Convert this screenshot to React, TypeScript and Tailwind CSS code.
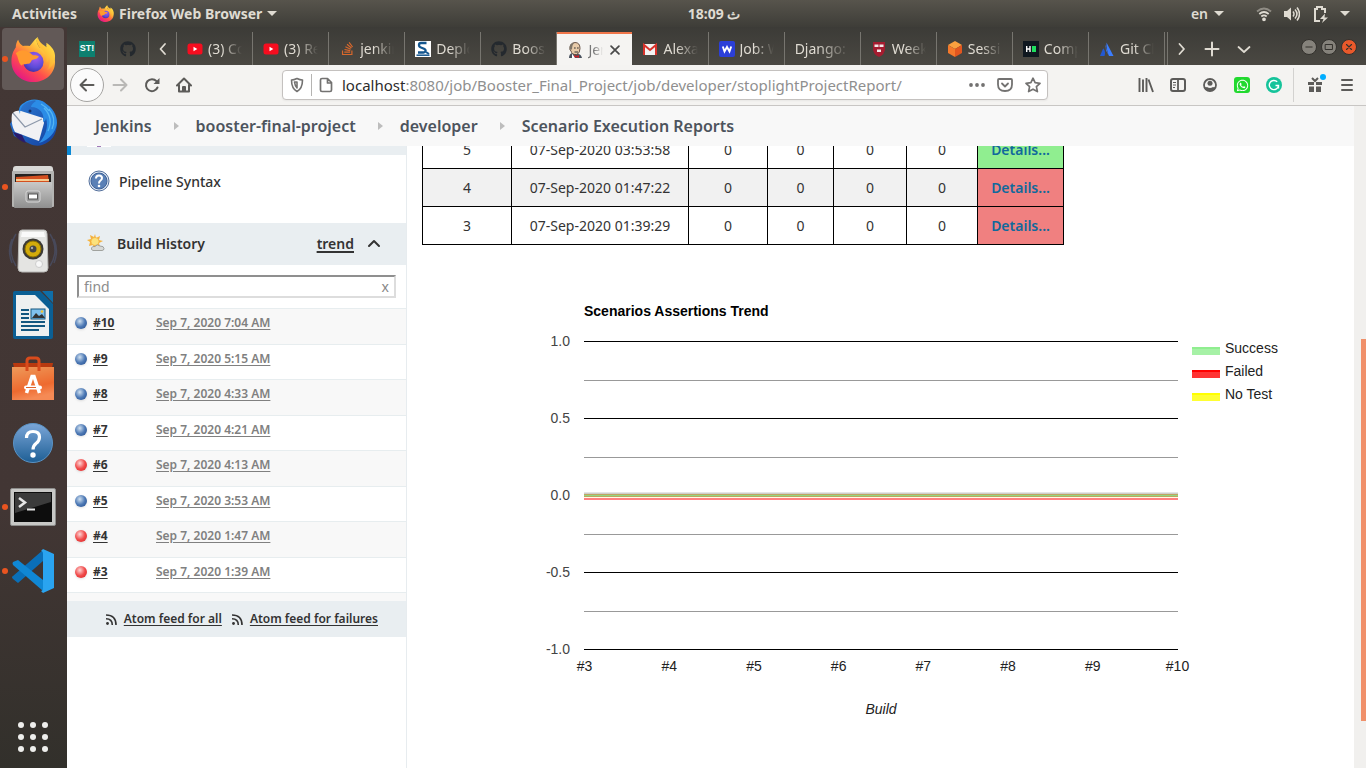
import React from "react";
import { FaGithub, FaWhatsapp, FaStackOverflow } from "react-icons/fa";

const FirefoxLogo = ({ size, id }: { size: number; id: string }) => (
  <svg width={size} height={size} viewBox="0 0 48 48" aria-hidden="true">
    <defs>
      <linearGradient id={id + "a"} x1="0.8" y1="0.1" x2="0.2" y2="0.95">
        <stop offset="0" stopColor="#fff44f" />
        <stop offset="0.35" stopColor="#ffa436" />
        <stop offset="0.65" stopColor="#ff4d4d" />
        <stop offset="1" stopColor="#e31587" />
      </linearGradient>
      <radialGradient id={id + "b"} cx="0.6" cy="0.3" r="0.8">
        <stop offset="0" stopColor="#a45bf0" />
        <stop offset="0.6" stopColor="#5b4bd8" />
        <stop offset="1" stopColor="#3a2a9c" />
      </radialGradient>
      <linearGradient id={id + "c"} x1="1" y1="0" x2="0.3" y2="1">
        <stop offset="0" stopColor="#fff44f" />
        <stop offset="0.7" stopColor="#ffb433" />
        <stop offset="1" stopColor="#ff7139" stopOpacity="0.2" />
      </linearGradient>
    </defs>
    <path d="M29 1c-2 4-1 7 2 11l8 2c-1-2-1-3-1-5 5 5 9 11 9 18 0 12-10 21-22.500 21S1.500 39 1.500 26.500c0-7 2-11 4.500-14.500 0-3 1-6 2.500-8 1 3 2.500 5 5 6.500 2-.5 5-.5 7 0C23 8 25 4 29 1z" fill={"url(#" + id + "a)"} />
    <circle cx="24.500" cy="27" r="10.500" fill={"url(#" + id + "b)"} />
    <path d="M29 1c-2 4-1 7 2 11 5 4 8 9 7 16 2-2 3-5 2-9 3 5 2 12-2 17 6-3 9-9 9-15 0-5-3-10-9-14 0 2 0 3 1 5C34 9 30 6 29 1z" fill={"url(#" + id + "c)"} />
    <path d="M6 18c4-4 9-4 14-1l4 3c2 0 4 0 6 1-1 3-5 3-7 4-2 2-1 4-5 4-3 1-5 0-6 2-4-4-3-9-6-13z" fill="#ff9a2e" />
  </svg>
);

const ThunderbirdIcon = () => (
  <svg width="50" height="50" viewBox="0 0 50 50" aria-hidden="true">
    <defs>
      <linearGradient id="tb" x1="0" y1="0" x2="1" y2="1">
        <stop offset="0" stopColor="#2f7fd8" />
        <stop offset="1" stopColor="#123f9e" />
      </linearGradient>
    </defs>
    <path d="M11 12C14 4 22 1 30 3c4-1 7 1 8 3 7 4 11 11 11 19 0 12-6 19-15 22-3 1-8 1-12-1L6 38 2 26z" fill="url(#tb)" />
    <path d="M4 16c2-3 5-4 9-3l22 7 1 5-5 18-3-1-21-8c-3-5-4-12-3-18z" fill="#f1f1f4" />
    <path d="M5 15l12 14 17-8" fill="none" stroke="#8d98aa" strokeWidth="1.200" />
    <path d="M12 16c0-9 8-14 16-13-3 2-5 4-5 6 9 0 14 7 12 15 2-1 3-2 3-4 3 9-1 19-7 25 10-3 17-11 18-20 0-8-5-16-12-20-7-5-16-4-21 0-4 2-6 5-4 11z" fill="#2b8ce6" />
    <path d="M36 10c6 6 8 14 4 23M41 11c5 6 6 13 3 20M33 6c4 2 6 4 8 7" fill="none" stroke="#54b5f3" strokeWidth="1.300" />
    <path d="M5 34c3 6 7 9 13 11l-4-8z" fill="#2a1b6c" />
    <circle cx="22" cy="13" r="1.500" fill="#14306b" />
  </svg>
);

const FilesIcon = () => (
  <svg width="44" height="46" viewBox="0 0 44 46" aria-hidden="true">
    <defs>
      <linearGradient id="fi" x1="0" y1="0" x2="0" y2="1">
        <stop offset="0" stopColor="#c9c9c8" />
        <stop offset="1" stopColor="#8f8f8f" />
      </linearGradient>
    </defs>
    <path d="M2 5q0-3 3-3h34q3 0 3 3l1 8H1z" fill="#d9d9d7" />
    <rect x="1" y="7" width="42" height="36" rx="1" fill="#b4b4b2" />
    <rect x="4" y="10" width="36" height="10" fill="#242220" />
    <path d="M5 13l17-1 15-1 1 7H5z" fill="#d4501f" />
    <path d="M5 15h33v2H5z" fill="#f6c98e" />
    <rect x="3" y="18" width="38" height="26" rx="1" fill="url(#fi)" />
    <rect x="15" y="27" width="14" height="11" rx="2" fill="#9b9b9b" stroke="#d8d8d8" />
    <rect x="17.500" y="30" width="9" height="5" fill="#fff" stroke="#555" />
  </svg>
);

const SpeakerIcon = () => (
  <svg width="50" height="46" viewBox="0 0 50 46" aria-hidden="true">
    <path d="M8 6q-10 16 0 32M4 11q-5 12 0 24M42 6q10 16 0 32M46 11q5 12 0 24" fill="none" stroke="#4e5c80" strokeOpacity="0.500" strokeWidth="1.500" />
    <path d="M14 2h22q3 0 3 4l1 34q0 4-4 4H14q-4 0-4-4l1-34q0-4 3-4z" fill="#e4e4e2" stroke="#b9b9b7" />
    <path d="M14 4h22l1 5H13z" fill="#fafafa" />
    <circle cx="25" cy="21" r="10.500" fill="#3c3a36" />
    <circle cx="25" cy="21" r="8" fill="#d3ab0b" stroke="#8e7202" />
    <circle cx="25" cy="21" r="3.500" fill="#444" />
    <circle cx="24" cy="20" r="1.200" fill="#aaa" />
    <circle cx="31" cy="36" r="3.500" fill="#f7f7f7" stroke="#ccc" />
  </svg>
);

const WriterIcon = () => (
  <svg width="42" height="50" viewBox="0 0 42 50" aria-hidden="true">
    <path d="M3 1h25l13 13v33q0 2-2 2H3q-2 0-2-2V3q0-2 2-2z" fill="#0b5f94" />
    <path d="M30 1h11v12z" fill="#0f6ea8" />
    <path d="M4 5h19l14 14v27H4z" fill="#eef0f0" />
    <path d="M9 20h8M9 24h8M9 28h8M9 32h24M9 36h24M9 40h18" stroke="#14577f" strokeWidth="2" />
    <rect x="19" y="19" width="14" height="10" fill="#7fc1ee" stroke="#14577f" />
    <path d="M20 28l4-5 3 3 3-2 3 4z" fill="#333" />
    <circle cx="30" cy="21.500" r="1.300" fill="#f4c430" />
  </svg>
);

const SoftwareIcon = () => (
  <svg width="44" height="46" viewBox="0 0 44 46" aria-hidden="true">
    <defs>
      <linearGradient id="sw" x1="0" y1="0" x2="0.300" y2="1">
        <stop offset="0" stopColor="#ee9a5a" />
        <stop offset="0.700" stopColor="#ee6a2f" />
        <stop offset="1" stopColor="#f58a55" />
      </linearGradient>
    </defs>
    <path d="M2 7h40l-1 5H3z" fill="#b8390f" />
    <rect x="1" y="11" width="42" height="33" fill="url(#sw)" />
    <path d="M16 15V5q0-3 3-3h6q3 0 3 3v10" fill="none" stroke="#d94b1c" strokeWidth="3" />
    <path d="M15.500 37L21 20.500h2L28.500 37" fill="none" stroke="#fff" strokeWidth="3.500" />
    <rect x="13" y="29.500" width="18" height="4" rx="2" fill="#fff" />
    <path d="M15 31.500h10" stroke="#e0632b" />
  </svg>
);

const HelpDockIcon = () => (
  <svg width="44" height="44" viewBox="0 0 44 44" aria-hidden="true">
    <defs>
      <linearGradient id="hd" x1="0" y1="0" x2="0" y2="1">
        <stop offset="0" stopColor="#7ba6d8" />
        <stop offset="1" stopColor="#1e5f95" />
      </linearGradient>
    </defs>
    <circle cx="22" cy="22" r="19.500" fill="url(#hd)" stroke="#5a93c5" />
    <path d="M15.500 17q0-6.500 6.500-6.500t6.500 5.500q0 4-3.500 6.500-3 2.500-3 6" fill="none" stroke="#fff" strokeWidth="3.200" />
    <circle cx="22" cy="34" r="2.700" fill="#fff" />
  </svg>
);

const TerminalIcon = () => (
  <svg width="46" height="38" viewBox="0 0 46 38" aria-hidden="true">
    <rect x="0.500" y="0.500" width="45" height="37" rx="1.500" fill="#c8c8c6" stroke="#8d8d8b" />
    <rect x="4" y="4" width="38" height="30" fill="#0d0d0d" />
    <path d="M5 5h36v9L5 25z" fill="#3b3b3b" />
    <path d="M9 10l6 4.500-6 4.500" fill="none" stroke="#e6e6e6" strokeWidth="2.500" />
    <path d="M17 21.500h8" stroke="#e6e6e6" strokeWidth="2" />
  </svg>
);

const CodeIcon = () => (
  <svg width="44" height="44" viewBox="0 0 44 44" aria-hidden="true">
    <path d="M32 1v11L7 34l-5-4q-2-2 0-3z" fill="#0a6fb8" />
    <path d="M7 11l25 20v11L2 16q-1-2 0-3z" fill="#1087d4" />
    <path d="M32 0l11 5v34l-11 5-2-2q2 0 2-3V5q0-3-2-3z" fill="#2aa4f0" />
  </svg>
);

const dockItems = [
  { name: "Firefox", icon: <FirefoxLogo size={46} id="dock" />, running: true, active: true },
  { name: "Thunderbird", icon: <ThunderbirdIcon /> },
  { name: "Files", icon: <FilesIcon />, running: true },
  { name: "Rhythmbox", icon: <SpeakerIcon /> },
  { name: "Writer", icon: <WriterIcon /> },
  { name: "Software", icon: <SoftwareIcon /> },
  { name: "Help", icon: <HelpDockIcon /> },
  { name: "Terminal", icon: <TerminalIcon />, running: true },
  { name: "Code", icon: <CodeIcon />, running: true },
];

const YoutubeIcon = () => (
  <svg width="16" height="16" viewBox="0 0 16 16" aria-hidden="true">
    <rect x="0.500" y="2.500" width="15" height="11" rx="2.500" fill="#f60d1f" />
    <path d="M6.500 5.800v4.400L10.300 8z" fill="#fff" />
  </svg>
);
const DeployIcon = () => (
  <svg width="16" height="16" viewBox="0 0 16 16" aria-hidden="true">
    <rect width="16" height="16" fill="#fff" />
    <path d="M11.500 2H6Q4 2 4 4t2 2.500l3 1.200q2 1 1.500 2.500T8 11.500H3" fill="none" stroke="#14568e" strokeWidth="2.300" />
    <path d="M1.500 14.200h13" stroke="#14568e" strokeWidth="1.500" />
    <path d="M11 11l3 2" stroke="#14568e" strokeWidth="2" />
  </svg>
);
const JenkinsIcon = () => (
  <svg width="16" height="16" viewBox="0 0 16 16" aria-hidden="true">
    <path d="M2 16q0-4 3-5l6 1q3 0 4 4z" fill="#48515d" />
    <path d="M3 6q0-5 5-5.500 5 0 5 6 0 5-3.500 6Q5 13 4 9 2.500 8 3 6z" fill="#e8cba9" stroke="#5c463a" strokeWidth="0.900" />
    <path d="M2.700 7.500Q1.500 1 8 .4 5 2 5 7.500z" fill="#7d7468" />
    <path d="M7 6h1.700M10 6h1.700M7.500 10h3.500" stroke="#333" strokeWidth="1" />
    <path d="M7 13l2.500 1L12 13v3l-2.500-1L7 16z" fill="#c8242b" />
    <path d="M5 11.500l3 4.500H5z" fill="#fff" />
  </svg>
);
const GmailIcon = () => (
  <svg width="16" height="16" viewBox="0 0 16 16" aria-hidden="true">
    <rect x="1" y="3" width="14" height="11" rx="1" fill="#f2f2f2" />
    <path d="M2 14V4l6 5 6-5v10" fill="none" stroke="#d9322b" strokeWidth="2" />
  </svg>
);
const WIcon = () => (
  <svg width="16" height="16" viewBox="0 0 16 16" aria-hidden="true">
    <rect width="16" height="16" rx="2" fill="#2b3fd8" />
    <path d="M3.800 5.500l1.700 5L8 6l2.500 4.500 1.700-5" fill="none" stroke="#fff" strokeWidth="1.900" />
  </svg>
);
const HarvardIcon = () => (
  <svg width="16" height="16" viewBox="0 0 16 16" aria-hidden="true">
    <path d="M2 1h12v7q0 5-6 8-6-3-6-8z" fill="#a51c30" />
    <path d="M3.500 3.500h4v2.500h-4zM8.500 3.500h4V6h-4zM6 8.500h4V11H6z" fill="#f3e9e9" />
  </svg>
);
const CubeIcon = () => (
  <svg width="16" height="16" viewBox="0 0 16 16" aria-hidden="true">
    <path d="M8 0l7 4-7 4-7-4z" fill="#f9a13f" />
    <path d="M1 4l7 4v8l-7-4z" fill="#f4792b" />
    <path d="M15 4L8 8v8l7-4z" fill="#e2561f" />
  </svg>
);
const HIcon = () => (
  <svg width="16" height="16" viewBox="0 0 16 16" aria-hidden="true">
    <rect width="16" height="16" fill="#101820" />
    <path d="M3.700 5v6M7 5v6M3.700 8H7" stroke="#fff" strokeWidth="1.400" />
    <rect x="9" y="5" width="4" height="6" fill="#1fe05f" />
  </svg>
);
const AtlassianIcon = () => (
  <svg width="16" height="16" viewBox="0 0 16 16" aria-hidden="true">
    <path d="M4.500 7.500Q7 11 5.500 15H1l3-7.200z" fill="#2358d0" />
    <path d="M7.500 1.500L14.500 15H10Q7 8 7.500 1.500z" fill="#3b7dff" />
    <path d="M7.500 1.500Q5.500 6 10 15L7 9.500Q5.800 5 7.500 1.500z" fill="#3b7dff" />
  </svg>
);

const tabs = [
  { icon: <YoutubeIcon />, label: "(3) Co" },
  { icon: <YoutubeIcon />, label: "(3) Re" },
  { icon: <FaStackOverflow size={15} color="#d9682c" />, label: "jenkin" },
  { icon: <DeployIcon />, label: "Deplo" },
  { icon: <FaGithub size={16} color="#24292e" />, label: "Boost" },
  { icon: <JenkinsIcon />, label: "Jen", active: true },
  { icon: <GmailIcon />, label: "Alexa" },
  { icon: <WIcon />, label: "Job: W" },
  { icon: null, label: "Django: H" },
  { icon: <HarvardIcon />, label: "Week" },
  { icon: <CubeIcon />, label: "Sessi" },
  { icon: <HIcon />, label: "Comp" },
  { icon: <AtlassianIcon />, label: "Git Cl" },
];

type StrokeProps = { d: string; size?: number; w?: number; className?: string };
const Line = ({ d, size = 16, w = 2, className = "" }: StrokeProps) => (
  <svg width={size} height={size} viewBox="0 0 16 16" fill="none" stroke="currentColor" strokeWidth={w} strokeLinecap="round" strokeLinejoin="round" className={className} aria-hidden="true">
    <path d={d} />
  </svg>
);

const Caret = () => (
  <svg width="10" height="5" viewBox="0 0 10 5" aria-hidden="true">
    <path d="M0 0h10L5 5z" fill="currentColor" />
  </svg>
);

function TopBar() {
  return (
    <header className="flex h-[27px] shrink-0 items-center bg-linear-to-b from-[#57544c] to-[#3e3d38] text-[14px] text-[#dfdbd2]">
      <div className="flex flex-1 items-center pl-3 font-bold">
        <button className="mr-5">Activities</button>
        <button className="flex items-center gap-[5px]">
          <FirefoxLogo size={17} id="bar" />
          Firefox Web Browser
          <Caret />
        </button>
      </div>
      <time dir="ltr" className="ml-[66px] text-[14px] font-bold">
        18:09 <span className="font-semibold">ث</span>
      </time>
      <div className="flex flex-1 items-center justify-end gap-3 pr-4">
        <button className="mr-5 flex items-center gap-[6px] font-semibold">en <Caret /></button>
        <svg width="16" height="16" viewBox="0 0 16 16" fill="none" stroke="currentColor" strokeWidth="1.800" aria-hidden="true">
          <path d="M1 5.500q7-6 14 0" opacity="0.450" />
          <path d="M3.300 8q4.700-4 9.400 0M5.300 10.500q2.700-2.300 5.400 0" />
          <circle cx="8" cy="13.300" r="1" fill="currentColor" />
        </svg>
        <svg width="16" height="16" viewBox="0 0 16 16" fill="none" stroke="currentColor" strokeWidth="1.500" aria-hidden="true">
          <path d="M0 5h3l4-3.500v13L3 11H0z" fill="currentColor" stroke="none" />
          <path d="M9 5.500q2 2.500 0 5M11 3.500q4 4.500 0 9M13 1.500q5 6.500 0 13" />
        </svg>
        <svg width="16" height="18" viewBox="0 0 16 18" fill="none" stroke="currentColor" strokeWidth="2" aria-hidden="true">
          <path d="M8 16H3V4h2V2h5v2h3v4" />
          <path d="M13 8.500l-5 5.500h3.500l-1.500 4 6-5.500h-3.500z" fill="currentColor" stroke="none" />
        </svg>
        <Caret />
      </div>
    </header>
  );
}

function Dock() {
  return (
    <nav aria-label="Dock" className="flex w-[67px] shrink-0 flex-col bg-linear-to-b from-[#433735] via-[#423634] via-65% to-[#32302b]">
      {dockItems.map((item) => (
        <button key={item.name} aria-label={item.name} className="relative flex h-16 w-full items-center pl-[2px]">
          <span className={item.active ? "flex h-[62px] w-[62px] items-center justify-center rounded bg-[#625957]" : "flex h-[62px] w-[62px] items-center justify-center"}>
            {item.icon}
          </span>
          {item.running && <span className="absolute left-[2px] size-[6px] rounded-full bg-[#e95420]" />}
        </button>
      ))}
      <button aria-label="Show applications" className="mt-auto mb-4 ml-[18px] grid w-[30px] grid-cols-3 gap-[6px]">
        {[0, 1, 2, 3, 4, 5, 6, 7, 8].map((n) => (
          <span key={n} className="size-[6px] rounded-full bg-[#eeeeec]" />
        ))}
      </button>
    </nav>
  );
}

const winBtn = "flex size-4 items-center justify-center rounded-full border border-[#33312d]";

function TabStrip() {
  return (
    <div className="flex h-[38px] shrink-0 bg-linear-to-b from-[#3c3b37] to-[#4a4842] pt-[5px] text-[14px] text-[#dfdbd2]">
      <button aria-label="Stoplight" className="flex w-[41px] items-center justify-center border-r border-[#77756f]">
        <span className="flex size-4 items-center justify-center bg-[#0d8070] font-['Liberation_Sans',sans-serif] text-[9px] font-bold text-white">ST!</span>
      </button>
      <button aria-label="GitHub" className="flex w-[41px] items-center justify-center border-r border-[#77756f]">
        <FaGithub size={16} color="#24292e" />
      </button>
      <button aria-label="Scroll tabs left" className="flex w-7 items-center justify-center border-r border-[#77756f]">
        <Line d="M10 3L5.500 8 10 13" w={1.8} />
      </button>
      <div role="tablist" className="flex min-w-0 flex-1">
        {tabs.map((t, i) => (
          <div
            key={i}
            role="tab"
            aria-selected={!!t.active}
            className={
              t.active
                ? "flex min-w-0 flex-1 items-center gap-[5px] border-t-2 border-[#f0764a] bg-[#f5f4f2] px-[10px] text-[#777]"
                : "flex min-w-0 flex-1 items-center gap-[5px] border-r border-[#77756f] px-[10px]"
            }
          >
            {t.icon && <span className="flex w-4 shrink-0 justify-center">{t.icon}</span>}
            <span className="min-w-0 flex-1 overflow-hidden mask-r-from-40% mask-r-to-100% whitespace-nowrap">{t.label}</span>
            {t.active && (
              <button aria-label="Close tab" className="shrink-0 text-[#4a4a4a]">
                <Line d="M3.500 3.500l9 9M12.500 3.500l-9 9" size={14} w={2} />
              </button>
            )}
          </div>
        ))}
      </div>
      <div className="flex items-center">
        <span className="h-full w-[3px] border-r border-[#77756f]" />
        <button aria-label="Scroll tabs right" className="ml-[5px] flex w-[18px] justify-center"><Line d="M5.500 3L10 8l-4.500 5" w={1.8} /></button>
        <button aria-label="New tab" className="ml-3 flex w-[18px] justify-center"><Line d="M8 1.500v13M1.500 8h13" /></button>
        <button aria-label="List tabs" className="ml-[14px] flex w-[18px] justify-center"><Line d="M2.500 6L8 11l5.500-5" w={1.8} /></button>
        <div className="mr-[9px] ml-12 flex items-center gap-1 pb-1 text-[#33312d]">
          <button aria-label="Minimize" className={winBtn + " bg-[#85827b]"}><Line d="M3 8h10" size={10} w={1.6} /></button>
          <button aria-label="Maximize" className={winBtn + " bg-[#85827b]"}><Line d="M2.500 4h11v8h-11z" size={10} w={1.6} /></button>
          <button aria-label="Close" className={winBtn + " bg-[#e9592b]"}><Line d="M4 4l8 8M12 4l-8 8" size={10} w={1.8} /></button>
        </div>
      </div>
    </div>
  );
}

const toolBtn = "flex w-8 shrink-0 items-center justify-center";

function Toolbar() {
  return (
    <div className="flex h-[41px] shrink-0 items-center border-b border-[#c8c6c4] bg-[#f4f3f1] pr-[3px] pl-[3px] text-[#5c5b59]">
      <button aria-label="Back" className="flex size-[34px] shrink-0 items-center justify-center rounded-full border border-[#a5a4a2] bg-[#fbfbfb]">
        <Line d="M14.500 8h-13M7 2.500L1.500 8 7 13.500" />
      </button>
      <button aria-label="Forward" className={toolBtn + " text-[#b9b8b6]"}><Line d="M1.500 8h13M9 2.500L14.500 8 9 13.500" /></button>
      <button aria-label="Reload" className={toolBtn}>
        <svg width="16" height="16" viewBox="0 0 16 16" aria-hidden="true">
          <path d="M13.500 10.500A6 6 0 1 1 12.500 4.200" fill="none" stroke="currentColor" strokeWidth="2" strokeLinecap="round" />
          <path d="M15.500 1v6h-6z" fill="currentColor" />
        </svg>
      </button>
      <button aria-label="Home" className={toolBtn}>
        <svg width="16" height="16" viewBox="0 0 16 16" fill="none" stroke="currentColor" strokeWidth="2" strokeLinecap="round" strokeLinejoin="round" aria-hidden="true">
          <path d="M1 8.500L8 1.500l7 7M3 8v6.500h10V8" />
          <path d="M7 14v-4h2v4z" />
        </svg>
      </button>
      <div className="mx-[82px] flex h-[30px] min-w-0 flex-1 items-center rounded border border-[#c4c1bf] bg-white px-[6px] shadow-xs">
        <Line d="M8 1.500Q5 3 2.500 3q0 8.500 5.500 11.500Q13.500 11.500 13.500 3 11 3 8 1.500zM8 5v6q-2-2-2.500-6z" w={1.6} className="text-[#737271]" />
        <span className="mx-[6px] h-[22px] w-px bg-[#b5b4b2]" />
        <Line d="M4 1.500h5.500l4 4V13q0 1.500-1.500 1.500H4q-1.500 0-1.500-1.500V3Q2.500 1.500 4 1.500zM9.500 2v4h4" w={1.7} className="text-[#737271]" />
        <label htmlFor="url" className="ml-2 text-[15px] text-[#2b2b2b]">localhost</label>
        <input id="url" defaultValue=":8080/job/Booster_Final_Project/job/developer/stoplightProjectReport/" className="min-w-0 flex-1 bg-transparent text-[15px] text-[#8f8f8f] outline-none" />
        <div className="flex items-center gap-3 text-[#737271]">
          <button aria-label="Page actions">
            <svg width="16" height="16" viewBox="0 0 16 16" fill="currentColor" aria-hidden="true"><circle cx="2" cy="8" r="1.900" /><circle cx="8" cy="8" r="1.900" /><circle cx="14" cy="8" r="1.900" /></svg>
          </button>
          <button aria-label="Save to Pocket"><Line d="M2 2h12q1 0 1 1v4.500q0 6.500-7 6.500T1 7.500V3q0-1 1-1zM5 6.500l3 3 3-3" w={1.8} /></button>
          <button aria-label="Bookmark"><Line d="M8 1.200l2.100 4.500 4.900.6-3.600 3.400 1 4.900L8 12.200l-4.400 2.400 1-4.900L1 6.300l4.900-.6z" w={1.7} /></button>
        </div>
      </div>
      <button aria-label="Library" className={toolBtn}>
        <svg width="16" height="16" viewBox="0 0 16 16" stroke="currentColor" strokeWidth="1.900" aria-hidden="true"><path d="M1.500 1v14M5 2.500V15M8.500 1v14M10.500 2.500L15 15" /></svg>
      </button>
      <button aria-label="Sidebars" className={toolBtn}>
        <svg width="16" height="16" viewBox="0 0 16 16" fill="none" stroke="currentColor" aria-hidden="true"><rect x="1" y="2" width="14" height="12" rx="2" strokeWidth="2" /><path d="M8 2v12" strokeWidth="1.800" /><path d="M3 5.500h3M3 8h3M3 10.500h2" /></svg>
      </button>
      <button aria-label="Account" className={toolBtn}>
        <svg width="16" height="16" viewBox="0 0 16 16" aria-hidden="true"><circle cx="8" cy="8" r="6" fill="none" stroke="currentColor" strokeWidth="1.800" /><circle cx="8" cy="6.300" r="2.500" fill="currentColor" /><path d="M2.500 10.200q1.500.3 2.500-.2 3 2 6 0 1 .5 2.500.2-1.500 4-5.500 4t-5.500-4z" fill="currentColor" /></svg>
      </button>
      <button aria-label="WhatsApp" className={toolBtn}>
        <span className="flex size-4 items-center justify-center rounded-[3px] bg-[#22d92f] text-white"><FaWhatsapp size={13} /></span>
      </button>
      <button aria-label="Grammarly" className={toolBtn}>
        <svg width="16" height="16" viewBox="0 0 16 16" aria-hidden="true"><circle cx="8" cy="8" r="8" fill="#15c39a" /><path d="M11.200 4.800A4.600 4.600 0 1 0 12.500 8.500H9.500M12.500 8.500v3" fill="none" stroke="#fff" strokeWidth="1.400" /></svg>
      </button>
      <span className="mr-[5px] ml-[3px] h-[34px] w-px bg-[#d3d2d0]" />
      <button aria-label="What's new" className={toolBtn + " relative"}>
        <svg width="16" height="16" viewBox="0 0 16 16" fill="currentColor" aria-hidden="true"><path d="M1 5h6v3H1zM9 5h6v3H9zM2 9.500h5V15H2zM9 9.500h5V15H9z" /><path d="M5 1l3 3 3-3" fill="none" stroke="currentColor" strokeWidth="2" /></svg>
        <span className="absolute top-[-3px] right-[5px] size-[6px] rounded-full bg-[#00adff]" />
      </button>
      <button aria-label="Menu" className={toolBtn}><Line d="M3 3h10M3 8h10M3 13h10" /></button>
    </div>
  );
}

const Ball = ({ color }: { color: "blue" | "red" }) => (
  <span
    className={
      color === "blue"
        ? "size-3 shrink-0 rounded-full bg-radial-[at_40%_35%] from-[#cfe0f0] via-[#4d79b5] to-[#1f4788] shadow-sm"
        : "size-3 shrink-0 rounded-full bg-radial-[at_40%_35%] from-[#ffd5d5] via-[#f04b4b] to-[#d91f1f] shadow-sm"
    }
  />
);

const builds: { id: string; date: string; color: "blue" | "red" }[] = [
  { id: "#10", date: "Sep 7, 2020 7:04 AM", color: "blue" },
  { id: "#9", date: "Sep 7, 2020 5:15 AM", color: "blue" },
  { id: "#8", date: "Sep 7, 2020 4:33 AM", color: "blue" },
  { id: "#7", date: "Sep 7, 2020 4:21 AM", color: "blue" },
  { id: "#6", date: "Sep 7, 2020 4:13 AM", color: "red" },
  { id: "#5", date: "Sep 7, 2020 3:53 AM", color: "blue" },
  { id: "#4", date: "Sep 7, 2020 1:47 AM", color: "red" },
  { id: "#3", date: "Sep 7, 2020 1:39 AM", color: "red" },
];

const Feed = ({ label }: { label: string }) => (
  <a href="#feed" className="flex items-center gap-[7px]">
    <svg width="11" height="11" viewBox="0 0 11 11" fill="none" stroke="currentColor" strokeWidth="1.600" aria-hidden="true">
      <path d="M0 1q10 0 10 10M0 4.700q6.300 0 6.300 6.300" />
      <circle cx="1.500" cy="9.500" r="1.400" fill="currentColor" stroke="none" />
    </svg>
    <span className="underline underline-offset-2">{label}</span>
  </a>
);

function Sidebar() {
  return (
    <aside className="w-[340px] shrink-0 border-r border-[#e7ecef] text-[#333]">
      <div className="h-[9px] border-l-4 border-[#0b89d6] bg-[#e9eef1] pl-4">
        <div className="flex h-px w-6 justify-center bg-white"><span className="w-1 bg-[#a07ab8]" /></div>
      </div>
      <a href="#syntax" className="flex h-[52px] items-center gap-[9px] pl-[21px] text-[14px] font-medium">
        <svg width="22" height="22" viewBox="0 0 22 22" aria-hidden="true">
          <circle cx="11" cy="11" r="10" fill="#dce5f1" stroke="#54709c" />
          <circle cx="11" cy="11" r="8" fill="#5a80b6" stroke="#3d6198" />
          <path d="M8 8.500q0-3 3-3t3 2.500q0 1.500-1.500 2.500T11 13.500" fill="none" stroke="#fff" strokeWidth="2" />
          <circle cx="11" cy="16" r="1.300" fill="#fff" />
        </svg>
        Pipeline Syntax
      </a>
      <div className="mt-4 flex h-[42px] items-center bg-[#e9eef1] pr-6 pb-[2px] pl-5 text-[14px] font-semibold">
        <svg width="18" height="18" viewBox="0 0 18 18" aria-hidden="true">
          <path d="M8 0l1 4 4-2-1 4 4 1-4 2 1 4-4-1-2 3-1-4-4 1 1-4-3-2 4-1-1-4 4 2z" fill="#f5b23c" />
          <circle cx="8" cy="7.500" r="4" fill="#fbe27c" stroke="#f2a93a" strokeWidth="0.600" />
          <path d="M6 16.500q-2-.5-1.500-2.500T8 12.500Q10 9.500 13 12q4 0 4 2.500 0 2-2 2z" fill="#d8d9d6" stroke="#8f908d" strokeWidth="0.800" />
        </svg>
        <h2 className="ml-3 flex-1">Build History</h2>
        <a href="#trend" className="underline decoration-2 underline-offset-2">trend</a>
        <button aria-label="Collapse" className="ml-3"><Line d="M3 11l5-5 5 5" w={2} /></button>
      </div>
      <div className="mx-[10px] mt-[10px] flex h-[23px] items-center border-2 border-t-[#8f8f8f] border-r-[#dddddd] border-b-[#dddddd] border-l-[#8f8f8f] px-[5px]">
        <input aria-label="Find build" placeholder="find" className="min-w-0 flex-1 text-[14px] outline-none placeholder:text-[#8d8d8d]" />
        <button aria-label="Clear" className="text-[14px] leading-4 text-[#888]">x</button>
      </div>
      <ul className="mt-[10px] flex h-[284px] flex-col text-[12px] leading-4 font-bold">
        {builds.map((b) => (
          <li key={b.id} className="flex flex-1 items-start border-t border-[#e7edef] pt-[6px] pl-2 odd:bg-[#f8f8f8]">
            <span className="mt-[2px] flex"><Ball color={b.color} /></span>
            <a href="#build" className="ml-[6px] w-[63px] underline underline-offset-2">{b.id}</a>
            <a href="#build" className="font-semibold text-[#808080] underline underline-offset-2">{b.date}</a>
          </li>
        ))}
      </ul>
      <div className="h-[9px] border-t border-[#e7edef] bg-[#f8f8f8]" />
      <div className="flex h-9 items-center justify-end gap-[10px] bg-[#e9eef1] pr-7 text-[12px] font-semibold">
        <Feed label="Atom feed for all" />
        <Feed label="Atom feed for failures" />
      </div>
    </aside>
  );
}

const runs = [
  { n: "5", time: "07-Sep-2020 03:53:58", ok: true },
  { n: "4", time: "07-Sep-2020 01:47:22", ok: false },
  { n: "3", time: "07-Sep-2020 01:39:29", ok: false },
];

const cell = "border border-black p-0";

function RunsTable() {
  return (
    <table className="-mt-4 w-[642px] table-fixed border-collapse text-center text-[14px] leading-5 text-[#333]">
      <colgroup>
        <col className="w-[89px]" />
        <col className="w-[177px]" />
        <col className="w-[79px]" />
        <col className="w-[66px]" />
        <col className="w-[73px]" />
        <col className="w-[71px]" />
        <col className="w-[86px]" />
      </colgroup>
      <tbody>
        {runs.map((r) => (
          <tr key={r.n} className="h-[38px] even:bg-[#f1f1f1]">
            <td className={cell}>{r.n}</td>
            <td className={cell}>{r.time}</td>
            <td className={cell}>0</td>
            <td className={cell}>0</td>
            <td className={cell}>0</td>
            <td className={cell}>0</td>
            <td className={r.ok ? "border border-black bg-[#90ee90] p-0" : "border border-black bg-[#f08080] p-0"}>
              <a href="#details" className="font-semibold text-[#11699c]">Details...</a>
            </td>
          </tr>
        ))}
      </tbody>
    </table>
  );
}

const major = [
  { y: 341, label: "1.0" },
  { y: 418, label: "0.5" },
  { y: 495, label: "0.0" },
  { y: 572, label: "-0.5" },
  { y: 649, label: "-1.0" },
];
const minor = [380, 457, 534, 611];
const legend = [
  { label: "Success", top: "#90ee90", fill: "#a6f1a6", y: 347 },
  { label: "Failed", top: "#ff0000", fill: "#ff3333", y: 370 },
  { label: "No Test", top: "#ffff00", fill: "#ffff33", y: 393 },
];
const xLabels = ["#3", "#4", "#5", "#6", "#7", "#8", "#9", "#10"];

function TrendChart() {
  return (
    <svg width="900" height="480" viewBox="422 245 900 480" role="img" aria-label="Scenarios Assertions Trend" className="block font-['Liberation_Sans',sans-serif] text-[14px]">
      <text x="584" y="316" fontWeight="bold" fill="#000">Scenarios Assertions Trend</text>
      {major.map((m) => (
        <g key={m.y}>
          <rect x="584" y={m.y} width="594" height="1" fill="#000" />
          <text x="570" y={m.y + 5} textAnchor="end" fill="#444">{m.label}</text>
        </g>
      ))}
      {minor.map((y) => (
        <rect key={y} x="584" y={y} width="594" height="1" fill="#999" />
      ))}
      <rect x="584" y="492" width="594" height="1" fill="#e5e5e5" />
      <rect x="584" y="493" width="594" height="1" fill="#cfcfcb" />
      <rect x="584" y="494" width="594" height="3" fill="#c0a560" />
      <rect x="584" y="495" width="594" height="1" fill="#90d880" />
      <rect x="584" y="497" width="594" height="1" fill="#fffbe6" />
      <rect x="584" y="498" width="594" height="2" fill="#ff8080" />
      {xLabels.map((l, i) => (
        <text key={l} x={584.5 + (i * 593) / 7} y="671" textAnchor="middle" fill="#222">{l}</text>
      ))}
      <text x="881" y="714" textAnchor="middle" fontStyle="italic" fill="#222">Build</text>
      {legend.map((l) => (
        <g key={l.label}>
          <rect x="1192" y={l.y} width="28" height="8" fill={l.fill} />
          <rect x="1192" y={l.y} width="28" height="2" fill={l.top} />
          <text x="1225" y={l.y + 6} fill="#222">{l.label}</text>
        </g>
      ))}
    </svg>
  );
}

const crumbs = ["Jenkins", "booster-final-project", "developer", "Scenario Execution Reports"];

export default function App() {
  return (
    <div className="flex h-screen flex-col overflow-hidden bg-white font-['Noto_Sans','Open_Sans',sans-serif]">
      <TopBar />
      <div className="flex min-h-0 flex-1">
        <Dock />
        <div className="flex min-w-0 flex-1 flex-col">
          <TabStrip />
          <Toolbar />
          <div className="flex min-h-0 flex-1">
            <div className="flex min-w-0 flex-1 flex-col">
              <nav aria-label="Breadcrumb" className="flex h-10 shrink-0 items-center bg-[#f8f8f8] pl-7 text-[16px] font-semibold text-[#4d545d]">
                {crumbs.map((c, i) => (
                  <React.Fragment key={c}>
                    {i > 0 && (
                      <svg width="5" height="8" viewBox="0 0 5 8" className="mr-[17px] ml-[22px]" aria-hidden="true"><path d="M0 0l5 4-5 4z" fill="#bdbdbd" /></svg>
                    )}
                    <a href="#crumb">{c}</a>
                  </React.Fragment>
                ))}
              </nav>
              <div className="flex min-h-0 flex-1 overflow-hidden">
                <Sidebar />
                <main className="min-w-0 flex-1 overflow-hidden pl-[15px]">
                  <RunsTable />
                  <TrendChart />
                </main>
              </div>
            </div>
            <div className="flex w-3 shrink-0 flex-col items-end bg-[#f1f0ee]">
              <div className="flex-[233]" />
              <div className="w-[5px] flex-[382] bg-[#f0906a]" />
              <div className="flex-[47]" />
            </div>
          </div>
        </div>
      </div>
    </div>
  );
}
